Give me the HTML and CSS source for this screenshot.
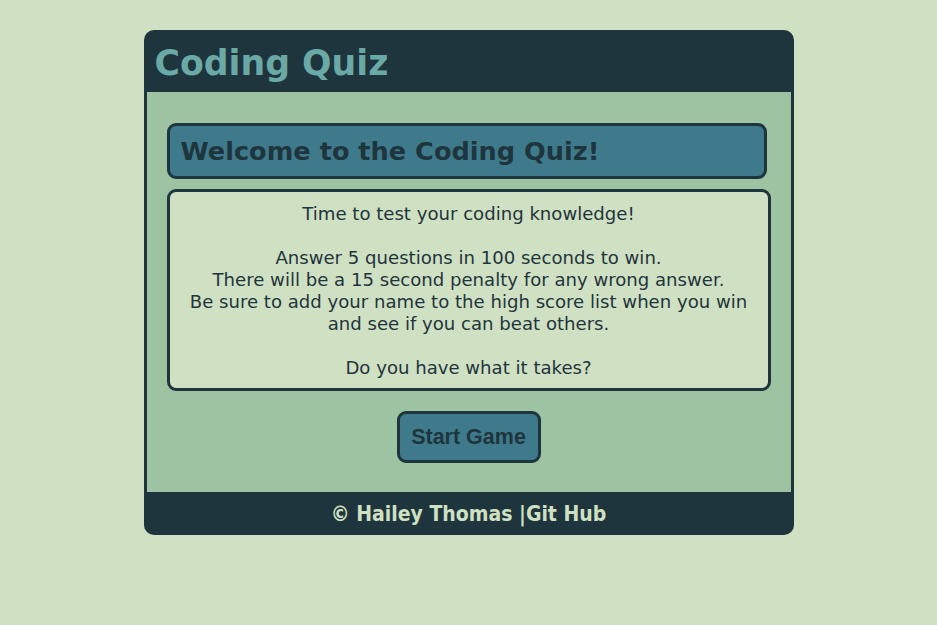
FILE: index.html
```html
<!DOCTYPE html>
<html lang="en">
<head>
<meta charset="utf-8">
<title>Coding Quiz</title>
<link rel="stylesheet" href="styles.css">
</head>
<body>
<div class="quiz">
  <header class="quiz-header">
    <h1 class="title">Coding Quiz</h1>
  </header>
  <main class="quiz-main">
    <div class="welcome">
      <h2 class="welcome-title">Welcome to the Coding Quiz!</h2>
    </div>
    <div class="intro">
      <p>Time to test your coding knowledge!<br><br>Answer 5 questions in 100 seconds to win.<br>There will be a 15 second penalty for any wrong answer.<br>Be sure to add your name to the high score list when you win and see if you can beat others.<br><br>Do you have what it takes?</p>
    </div>
    <div class="actions">
      <button class="start-btn" type="button">Start Game</button>
    </div>
  </main>
  <footer class="quiz-footer">
    <span>© Hailey Thomas |Git Hub</span>
  </footer>
</div>
</body>
</html>
```

FILE: styles.css
```css
html, body {
  margin: 0;
  padding: 0;
}
body {
  background: #d0e0c3;
  font-family: "DejaVu Sans", Verdana, sans-serif;
  color: #1f353d;
  padding-top: 30px;
}
.quiz {
  width: 650px;
  margin: 0 auto;
  background: #1f353d;
  border-radius: 10px;
  overflow: hidden;
}
.quiz-header {
  height: 62px;
  display: flex;
  align-items: center;
  padding-left: 11px;
  padding-top: 3px;
  box-sizing: border-box;
}
.title {
  margin: 0;
  font-size: 34.7px;
  font-weight: bold;
  color: #6aa9a5;
  line-height: 40px;
}
.quiz-main {
  margin: 0 3px;
  background: #9ec3a3;
  height: 400px;
  box-sizing: border-box;
  padding-top: 31px;
}
.welcome {
  margin: 0 24px 10px 20px;
  height: 56px;
  box-sizing: border-box;
  background: #3e7a8b;
  border: 3px solid #1f353d;
  border-radius: 9px;
  display: flex;
  align-items: center;
  padding-left: 11px;
}
.welcome-title {
  margin: 0;
  font-size: 25.6px;
  font-weight: bold;
  color: #1f353d;
}
.intro {
  margin: 0 20px;
  height: 202px;
  box-sizing: border-box;
  background: #d0e0c3;
  border: 3px solid #1f353d;
  border-radius: 9px;
  padding: 11px 10px 9px;
  text-align: center;
}
.intro p {
  margin: 0;
  font-size: 18.1px;
  line-height: 22px;
  color: #1f353d;
}
.actions {
  display: flex;
  justify-content: center;
  padding-top: 20px;
}
.start-btn {
  font-family: "Liberation Sans", Arial, sans-serif;
  font-weight: bold;
  font-size: 21.5px;
  line-height: 26px;
  color: #1f353d;
  background: #3e7a8b;
  border: 3px solid #1f353d;
  border-radius: 9px;
  padding: 10px 11px;
  height: 52px;
  width: 144px;
  box-sizing: border-box;
}
.quiz-footer {
  height: 43px;
  display: flex;
  align-items: center;
  justify-content: center;
  font-family: "DejaVu Sans Condensed", "DejaVu Sans", sans-serif;
  font-stretch: condensed;
  font-weight: bold;
  font-size: 21px;
  color: #d0e0c3;
}
```
